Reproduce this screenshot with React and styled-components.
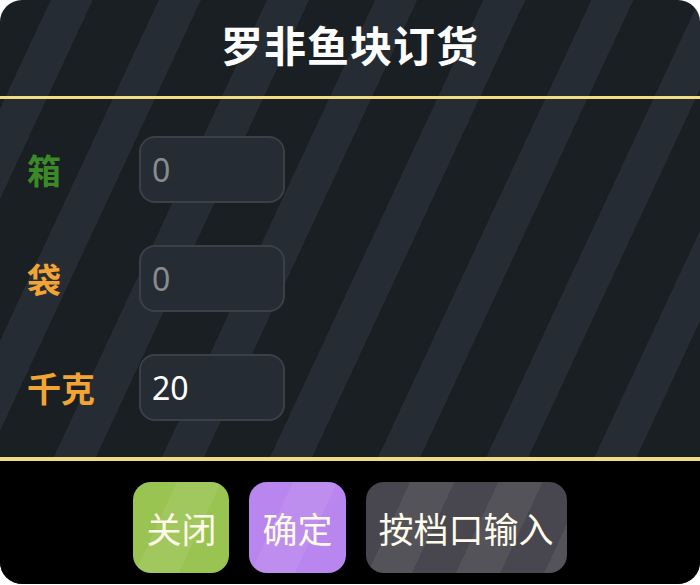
import React, { useState } from 'react'
import styled, { createGlobalStyle } from 'styled-components'

const GlobalStyle = createGlobalStyle`
    html, body {
        margin: 0;
        padding: 0;
        background: #ffffff;
    }
    * {
        box-sizing: border-box;
    }
`

const Card = styled.div`
    width: 700px;
    height: 584px;
    border-radius: 22px;
    overflow: hidden;
    display: flex;
    flex-direction: column;
    font-family: "Noto Sans CJK SC", "Noto Sans", sans-serif;
    background: repeating-linear-gradient(
        115deg,
        #191f23 0 46px,
        #262c34 46px 84px,
        #191f23 84px 98px
    );
`

const Header = styled.div`
    height: 99px;
    display: flex;
    align-items: center;
    justify-content: center;
    border-bottom: 3px solid #f1dc84;
    padding-bottom: 10px;

    h1 {
        margin: 0;
        color: #fdfdfd;
        font-size: 42px;
        font-weight: 700;
        letter-spacing: 1px;
    }
`

const Body = styled.div`
    flex: 1;
    display: flex;
    flex-direction: column;
    gap: 42px;
    padding: 37px 27px 0;
    border-bottom: 4px solid #f1dc84;
`

const Row = styled.div`
    display: flex;
    align-items: center;
`

const Label = styled.span`
    width: 112px;
    color: ${p => p.color};
    font-size: 34px;
    font-weight: 700;
    line-height: 1;
`

const Field = styled.input`
    width: 146px;
    height: 67px;
    border-radius: 16px;
    border: 2px solid #3a4048;
    background: #262c34;
    color: #ffffff;
    font-family: "Noto Sans", sans-serif;
    font-size: 32px;
    padding: 0 11px;
    outline: none;

    &::placeholder {
        color: #8b8b8b;
    }
`

const Footer = styled.div`
    height: 123px;
    background: #000;
    display: flex;
    justify-content: center;
    gap: 20px;
    padding-top: 21px;
`

const Button = styled.button`
    height: 91px;
    min-width: 96px;
    padding: 0 13px;
    border: none;
    border-radius: 18px;
    color: #fffbea;
    font-family: "Noto Sans CJK SC", sans-serif;
    font-size: 35px;
    cursor: pointer;
    background:
        repeating-linear-gradient(
            115deg,
            transparent 0 40px,
            rgba(255, 255, 255, 0.07) 40px 80px
        ),
        ${p => p.bg};
`

const rows = [
    { label: '箱', color: '#3b8a27', value: '' },
    { label: '袋', color: '#f2a534', value: '' },
    { label: '千克', color: '#f2a534', value: '20' },
]

const App = () => {
    const [values, setValues] = useState(rows.map(r => r.value))

    const update = (i, v) => {
        const next = [...values]
        next[i] = v
        setValues(next)
    }

    return (
        <>
            <GlobalStyle />
            <Card>
                <Header>
                    <h1>罗非鱼块订货</h1>
                </Header>
                <Body>
                    {rows.map((r, i) => (
                        <Row key={r.label}>
                            <Label color={r.color}>{r.label}</Label>
                            <Field
                                placeholder="0"
                                value={values[i]}
                                onChange={e => update(i, e.target.value)}
                            />
                        </Row>
                    ))}
                </Body>
                <Footer>
                    <Button bg="#99c452">关闭</Button>
                    <Button bg="#b985ee">确定</Button>
                    <Button bg="#48464e">按档口输入</Button>
                </Footer>
            </Card>
        </>
    )
}

export default App
